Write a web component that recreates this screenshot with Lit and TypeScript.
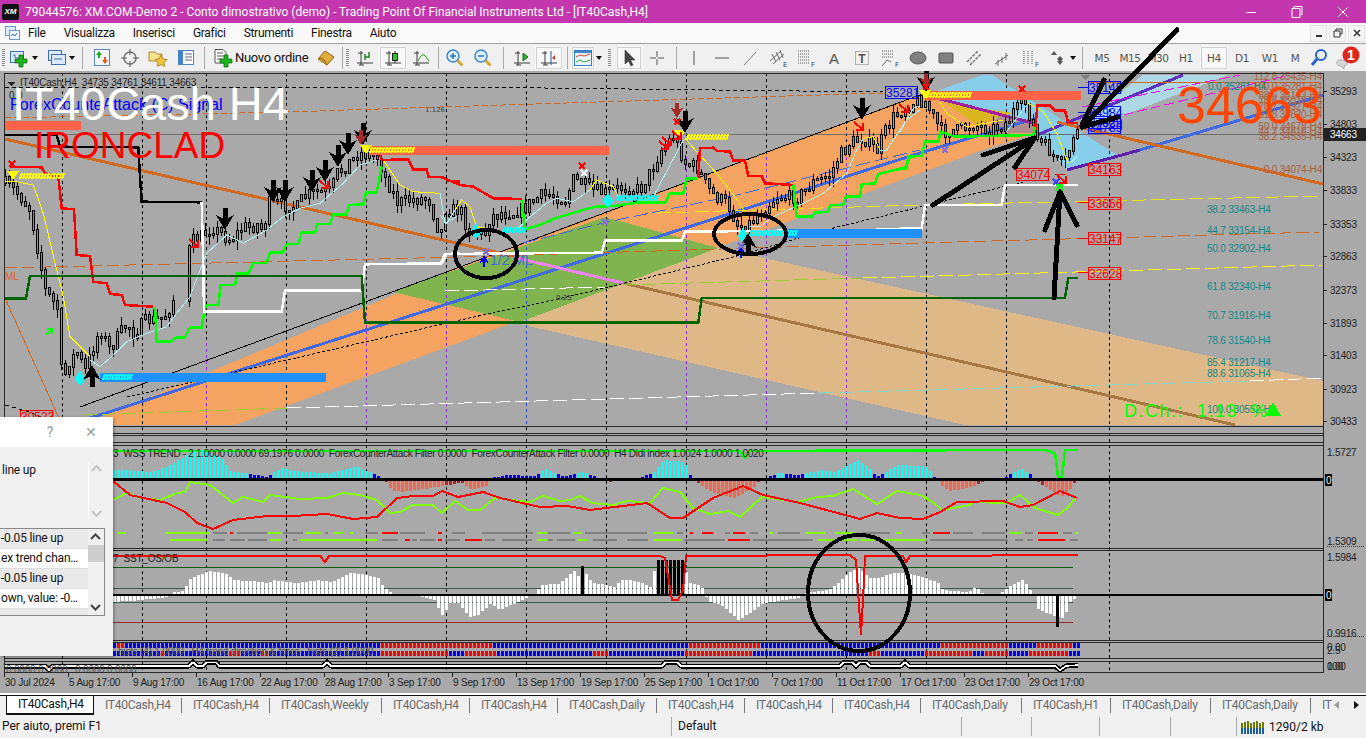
import {LitElement, html, svg, css} from 'lit';
import {customElement} from 'lit/decorators.js';

type Pt = [number, number];

// coordinates below were read off 3x crops, z() brings them back to page pixels
const z = (ox: number, oy: number, l: number[]): Pt[] => {
  const r: Pt[] = [];
  for (let i = 0; i < l.length; i += 2) r.push([ox + l[i] / 3, oy + l[i + 1] / 3]);
  return r;
};
const flat = (l: number[]): Pt[] => z(0, 0, l.map((v) => v * 3));
const lerp = (p: Pt[], x: number) => {
  if (x <= p[0][0]) return p[0][1];
  for (let i = 1; i < p.length; i++) {
    if (x <= p[i][0]) {
      const t = (x - p[i - 1][0]) / (p[i][0] - p[i - 1][0] || 1);
      return p[i - 1][1] + t * (p[i][1] - p[i - 1][1]);
    }
  }
  return p[p.length - 1][1];
};
let seed = 7;
const rnd = () => {
  seed = (seed * 16807) % 2147483647;
  return seed / 2147483647;
};

const path = (p: Pt[]) => p.map(([x, y]) => `${x.toFixed(1)},${y.toFixed(1)}`).join(' ');
const line = (p: Pt[], color: string, w = 1, dash = '') =>
  svg`<polyline points=${path(p)} fill="none" stroke=${color} stroke-width=${w} stroke-dasharray=${dash}></polyline>`;
const poly = (p: Pt[], color: string) => svg`<polygon points=${path(p)} fill=${color}></polygon>`;

const PRICE: Pt[] = [
  ...flat([5, 183, 17, 193, 30, 210, 37, 247, 45, 290, 57, 308, 62, 385, 68, 363, 77, 353, 85, 370, 93, 347, 100, 330, 110, 350, 117, 337, 127, 323, 133, 333, 147, 320, 160, 320, 167, 313, 173, 300, 183, 292]),
  ...flat([190, 243, 205, 233, 213, 228, 230, 240, 242, 228, 257, 225, 263, 230, 269, 203, 283, 205, 297, 207, 302, 198, 315, 192, 330, 192, 337, 173, 350, 162, 358, 153, 377, 157, 385, 178, 397, 202, 413, 200, 428, 198, 437, 227, 442, 232, 445, 210, 460, 210, 465, 223, 470, 233, 485, 233, 490, 217, 502, 213, 513, 213, 525, 207, 542, 195, 550, 195, 565, 200, 573, 180, 582, 183, 592, 190, 605, 193, 622, 187, 640, 190, 653, 167, 662, 148, 673, 137, 685, 163, 697, 168, 707, 187, 715, 197, 727, 203, 738, 227, 750, 223, 765, 207, 777, 197, 798, 197, 813, 183, 830, 175, 838, 158, 850, 143, 862, 138, 877, 150, 882, 137, 893, 117, 907, 107, 917, 100, 925, 102, 942, 133, 957, 130, 973, 125, 990, 130, 1007, 123, 1013, 112, 1025, 103, 1030, 117, 1037, 140, 1047, 148, 1057, 162, 1063, 167, 1069, 150, 1073, 135, 1078, 132]),
];

const HIST_TOP = flat([113, 470, 127, 470, 150, 472, 170, 465, 190, 452, 200, 450, 220, 458, 230, 472, 245, 473, 265, 477, 280, 468, 300, 472, 330, 473, 355, 466, 375, 475, 385, 482, 390, 490, 400, 492, 417, 490, 447, 485, 460, 482, 470, 490, 487, 485, 490, 478, 507, 475, 533, 476, 545, 469, 563, 477, 582, 472, 595, 477, 607, 482, 620, 480, 635, 479, 653, 472, 663, 460, 683, 462, 687, 468, 690, 479, 700, 485, 710, 492, 733, 498, 753, 487, 758, 481, 767, 477, 777, 473, 797, 475, 820, 470, 833, 472, 857, 460, 870, 470, 875, 477, 897, 465, 920, 466, 927, 468, 933, 477, 943, 488, 950, 491, 970, 487, 983, 481, 1003, 478, 1020, 468, 1030, 475, 1037, 482, 1060, 497, 1070, 488, 1077, 477]);
const HIST_OS = flat([113, 602, 140, 600, 167, 597, 173, 592, 183, 591, 188, 579, 208, 571, 223, 573, 233, 580, 260, 582, 267, 584, 272, 580, 293, 583, 317, 580, 330, 582, 350, 572, 377, 578, 383, 588, 390, 593, 398, 596, 417, 596, 433, 600, 442, 617, 448, 603, 457, 603, 468, 617, 477, 615, 490, 603, 498, 610, 517, 602, 532, 595, 540, 585, 557, 584, 573, 571, 577, 576, 585, 574, 590, 582, 613, 587, 622, 579, 638, 582, 650, 587, 655, 560, 683, 560, 687, 583, 700, 585, 703, 593, 708, 602, 720, 605, 737, 620, 750, 612, 763, 603, 797, 598, 805, 593, 828, 590, 837, 583, 848, 572, 857, 568, 870, 579, 880, 577, 893, 573, 903, 573, 923, 577, 937, 583, 942, 590, 967, 592, 975, 587, 980, 593, 997, 595, 1007, 587, 1022, 579, 1030, 592, 1033, 595, 1037, 609, 1055, 617, 1063, 618, 1068, 603, 1075, 598]);

const G = '#7fff00';
const S = '#808080';
const R = '#ff0000';
const DASH1: [number, number, string][] = [[118, 126, G], [165, 210, G], [213, 227, S], [230, 233, R], [237, 267, S], [268, 282, G], [283, 303, S], [305, 322, G], [325, 328, S], [333, 343, G], [350, 353, G], [365, 378, S], [382, 398, R], [400, 425, S], [438, 442, R], [452, 465, S], [482, 533, S], [537, 547, G], [548, 570, S], [573, 582, G], [585, 647, S], [653, 673, G], [677, 683, S], [690, 693, R], [702, 713, R], [725, 730, S], [733, 745, R], [750, 758, S], [770, 773, G], [778, 800, S], [805, 825, G], [835, 855, G], [862, 890, S], [895, 902, G], [922, 930, S], [933, 950, R], [953, 973, S], [982, 1005, S], [1010, 1022, G], [1025, 1033, S], [1038, 1058, R], [1063, 1072, S], [1075, 1078, G]];
const DASH2: [number, number, string][] = [[170, 208, G], [213, 225, S], [230, 245, S], [248, 267, S], [270, 282, G], [293, 297, S], [300, 377, G], [382, 398, S], [405, 410, R], [412, 417, S], [420, 435, S], [438, 442, R], [445, 460, S], [465, 482, R], [485, 495, S], [502, 532, S], [537, 547, G], [548, 553, S], [557, 575, S], [577, 587, G], [593, 617, S], [627, 648, S], [653, 682, G], [684, 700, S], [700, 725, S], [728, 750, R], [753, 813, S], [817, 857, G], [860, 925, G], [930, 1008, S], [1015, 1023, S], [1027, 1033, S], [1038, 1065, R], [1070, 1078, S]];
const ROW1: [number, number][] = [[115, 123], [380, 490], [688, 758], [940, 1008], [1035, 1072]];
const ROW2: [number, number][] = [[160, 163], [228, 240], [260, 267], [380, 447], [463, 495], [592, 608], [685, 752], [868, 878], [924, 972], [985, 1007], [1028, 1067]];

const GRID = [62, 142, 206, 286, 366, 446, 526, 606, 686, 766, 846, 926, 1006, 1109];
// [x, first y] of the vertical separators that turn coloured lower down; starts stay in phase with the black dashes
const VLINES: [number, number, string][] = [[206, 343, '#8a2be2'], [366, 313, '#8a2be2'], [446, 289, '#8a2be2'], [526, 241, '#2b4fd0'], [686, 157, '#8a2be2'], [766, 157, '#8a2be2'], [846, 157, '#8a2be2']];
const PRICES: [string, number][] = [['35293', 95], ['34803', 128], ['34323', 161], ['33833', 194], ['33353', 228], ['32863', 260], ['32373', 294], ['31893', 327], ['31403', 359], ['30923', 393], ['30433', 425]];
const FIBO_TEAL: [string, number][] = [['38.2 33463-H4', 213], ['44.7 33154-H4', 234], ['50.0 32902-H4', 252], ['61.8 32340-H4', 290], ['70.7 31916-H4', 319], ['78.6 31540-H4', 344], ['85.4 31217-H4', 366], ['88.6 31065-H4', 377], ['100.0 30552-H4', 413]];
const FIBO_BROWN: [string, number][] = [['112.8 35435-H4', 80], ['100.0 35281-H4', 90], ['88.6 35143-H4', 99], ['78.6 35016-H4', 104], ['70.7 34927-H4', 110], ['61.8 34820-H4', 118], ['50.0 34678-H4', 130], ['44.7 34616-H4', 135], ['38.2 34535-H4', 140], ['0.0 34074-H4', 173]];
const TIMES: [string, number][] = [['30 Jul 2024', 4], ['5 Aug 17:00', 68], ['9 Aug 17:00', 132], ['16 Aug 17:00', 196], ['22 Aug 17:00', 260], ['28 Aug 17:00', 324], ['3 Sep 17:00', 388], ['9 Sep 17:00', 452], ['13 Sep 17:00', 516], ['19 Sep 17:00', 580], ['25 Sep 17:00', 644], ['1 Oct 17:00', 708], ['7 Oct 17:00', 772], ['11 Oct 17:00', 836], ['17 Oct 17:00', 900], ['23 Oct 17:00', 964], ['29 Oct 17:00', 1028]];

const arrow = (x: number, tip: number, dir: number, color = '#000', s = 1) =>
  poly(
    [[-2.5, 22], [2.5, 22], [2.5, 12], [9, 15], [0, 0], [-9, 15], [-2.5, 12]].map(([dx, dy]) => [x + dx * s, tip - dir * dy * s] as Pt),
    color
  );
const downArrow = (x: number, tip: number, color = '#000', s = 1) => arrow(x, tip, 1, color, s);
const upArrow = (x: number, tip: number, color = '#000', s = 1) => arrow(x, tip, -1, color, s);
const hatch = (x1: number, x2: number, y: number, color: string) => {
  const out = [];
  for (let x = x1; x < x2; x += 3) out.push(svg`<line x1=${x} y1=${y + 3} x2=${x + 2} y2=${y - 3} stroke=${color} stroke-width="2"></line>`);
  return out;
};
const mark = (x: number, y: number, color: string, w = 1.5) =>
  svg`<path d="M${x - 3} ${y - 3}L${x + 3} ${y + 3}M${x + 3} ${y - 3}L${x - 3} ${y + 3}" stroke=${color} stroke-width=${w} fill="none"></path>`;
const redArrow = (x: number, y: number) =>
  svg`<path d="M${x - 6} ${y - 6}L${x + 3} ${y + 2}M${x + 3} ${y - 5}V${y + 2}H${x - 4}" stroke="#f00" stroke-width="2" fill="none"></path>`;
const priceBox = (x: number, y: number, label: string, color: string) => svg`
  <rect x=${x + 0.5} y=${y + 0.5} width="32" height="12" fill="none" stroke=${color}></rect>
  <text x=${x + 1} y=${y + 11} class="boxed" fill=${color}>${label}</text>`;

@customElement('mt-chart')
export class MtChart extends LitElement {
  private candles() {
    const out = [];
    let open = lerp(PRICE, 5);
    for (let x = 5; x <= 1078; x += 4) {
      if (x > 176 && x < 189) continue;
      const close = lerp(PRICE, x) + (rnd() - 0.5) * 13;
      const top = Math.round(Math.min(open, close));
      const bot = Math.round(Math.max(open, close));
      const hi = Math.round(top - rnd() * 9);
      const lo = Math.round(bot + rnd() * 10);
      const h = Math.max(1, bot - top);
      out.push(svg`
        <rect x=${x} y=${hi} width="1" height=${lo - hi} fill="#000"></rect>
        <rect x=${x - 1} y=${top - 1} width="3" height=${h + 2} fill="#000"></rect>
        <rect x=${x} y=${top} width="1" height=${h} fill=${close < open ? '#3ee83e' : '#f07020'}></rect>`);
      open = close;
    }
    return out;
  }

  private wssBars() {
    const out = [];
    for (let x = 113; x <= 1076; x += 4) {
      const y = Math.round(lerp(HIST_TOP, x));
      const v = 479 - y;
      const color = v >= 0 ? (v > 5 ? '#00ffff' : '#0000ff') : v < -6 ? '#ff6347' : '#b22222';
      out.push(svg`<rect x=${x} width="3" y=${Math.min(y, 479)} height=${Math.abs(v)} fill=${color}></rect>`);
    }
    return out;
  }

  private osBars() {
    const out = [];
    for (let x = 113; x <= 1076; x += 4) {
      const y = Math.round(lerp(HIST_OS, x));
      const black = (x >= 655 && x <= 683) || (x >= 578 && x <= 583);
      const top = x >= 578 && x <= 583 ? 566 : y;
      out.push(svg`<rect x=${x} width="3" y=${Math.min(top, 594)} height=${Math.abs(594 - top)} fill=${black ? '#000' : '#fff'}></rect>`);
    }
    return out;
  }

  private rows() {
    const out = [];
    for (let x = 5; x <= 1078; x += 4) {
      const r1 = ROW1.some(([a, b]) => x >= a && x <= b);
      const r2 = ROW2.some(([a, b]) => x >= a && x <= b);
      out.push(svg`<rect x=${x} y="643" width="3" height="5" fill=${r1 ? R : '#0000ff'}></rect>
        <rect x=${x} y="651" width="3" height="5" fill=${r2 ? R : '#0000ff'}></rect>`);
    }
    return out;
  }

  private main() {
    return svg`
      ${poly([[515, 323], [718, 248], [1323, 381], [1323, 425], [965, 425]], '#deb887')}
      ${poly([[83, 425], [460, 267], [925, 93], [1037, 133], [983, 150], [235, 425]], '#f4a460')}
      ${poly([[393, 292], [605, 217], [718, 248], [520, 322]], '#80b44f')}
      ${poly([[925, 95], [982, 75], [992, 75], [1120, 157], [1067, 170], [1037, 133]], '#87ceeb')}
      ${poly([[1082, 122], [1143, 75], [1228, 75], [1083, 131]], '#add8e6')}
      ${poly([[943, 102], [1012, 113], [977, 125]], '#dab520')}
      ${poly([[1000, 115], [1037, 125], [1037, 133], [983, 134]], '#b08c8c')}
      ${GRID.map((x) => svg`<line x1=${x + 0.5} x2=${x + 0.5} y1="73" y2="672" stroke="#000" stroke-dasharray="3 3"></line>`)}
      ${VLINES.map(([x, y, c]) => svg`<line x1=${x + 0.5} x2=${x + 0.5} y1=${y} y2="426" stroke=${c} stroke-dasharray="3 3"></line>`)}
      <line x1="5" x2="1323" y1="134.5" y2="134.5" stroke="#707070"></line>

      ${line([[80, 407], [460, 267], [925, 93]], '#000')}
      ${line([[62, 427], [920, 153], [1037, 118]], '#4169e1', 3)}
      ${line([[1067, 170], [1140, 150]], '#5b1fb0', 3)}
      ${line([[1140, 150], [1323, 95]], '#4169e1', 3)}
      ${line([[925, 95], [1037, 124]], '#a020a0', 3)}
      ${line([[1037, 135], [1183, 75]], '#5b2fc0', 3)}
      ${line([[1082, 107], [1240, 75]], '#ff00ff', 1, '10 4')}
      ${line([[1110, 118], [1290, 75]], '#ff00ff', 1, '10 4')}
      ${line([[5, 139], [517, 257]], '#d2691e', 3)}
      ${line([[517, 258], [623, 283]], '#ee82ee', 3)}
      ${line([[623, 283], [1235, 425]], '#a87844', 3)}
      ${line([[1057, 122], [1323, 184]], '#d2691e', 3)}
      ${line([[1085, 83], [1323, 82]], '#d2691e')}
      ${line([[5, 88], [460, 87], [883, 92]], '#000', 1, '4 3')}
      ${line([[5, 118], [287, 112], [440, 107], [883, 93]], '#d2691e', 1, '6 3')}
      ${line([[5, 268], [460, 257], [787, 247], [920, 243], [1320, 232]], '#d2691e', 1, '12 5')}
      ${line([[657, 213], [920, 205], [1323, 196]], '#e8e800', 1, '14 5')}
      ${line([[623, 285], [863, 278]], '#9acd32', 1, '14 5')}
      ${line([[863, 278], [1323, 265]], '#ffff00', 1, '14 5')}
      ${line([[83, 415], [287, 408]], '#9acd32', 1, '14 5')}
      ${line([[287, 408], [820, 393]], '#fff', 1, '14 5')}
      ${line([[820, 393], [1250, 381]], '#7fd8c8', 1, '14 5')}
      ${line([[1250, 381], [1323, 378]], '#fff', 1, '14 5')}
      ${line([[445, 291], [607, 287]], '#fff', 1, '14 5')}
      ${line([[127, 397], [460, 320], [567, 297], [733, 257], [837, 227], [920, 207], [1023, 182]], '#000', 1, '3 2')}
      ${line([[523, 243], [607, 222], [737, 195], [920, 150]], '#4169e1', 1, '14 5')}
      ${line([[5, 405], [30, 412], [62, 427]], '#000', 1, '4 3')}
      ${line([[5, 298], [62, 425]], '#d2691e')}

      ${this.candles()}

      ${line(z(0, 70, [270, 870, 300, 890, 340, 855, 380, 815, 440, 790, 500, 770, 530, 730, 570, 680, 600, 600, 620, 550, 680, 495, 730, 520, 800, 480, 850, 440, 900, 415, 960, 400, 1030, 340, 1080, 285, 1130, 270]), '#afeeee')}
      ${line(z(0, 70, [15, 335, 50, 335, 100, 345, 130, 430, 170, 600, 190, 680, 210, 800, 270, 860]), '#ffff00')}
      ${line(z(0, 70, [1150, 270, 1200, 345, 1240, 365, 1320, 370]), '#ffff00')}
      ${line(z(0, 70, [1320, 370, 1335, 460, 1370, 440]), '#afeeee')}
      ${line(z(440, 70, [0, 435, 20, 460, 45, 420]), '#afeeee')}
      ${line(z(440, 70, [45, 420, 65, 390, 90, 410, 110, 470, 170, 480]), '#ffff00')}
      ${line(z(440, 70, [200, 480, 240, 470, 270, 440, 320, 400, 350, 385, 400, 395, 450, 360]), '#afeeee')}
      ${line(z(440, 70, [450, 360, 470, 330, 520, 350, 535, 380]), '#ffff00')}
      ${line(z(440, 70, [535, 380, 640, 380, 730, 210]), '#afeeee')}
      ${line(z(440, 70, [735, 205, 770, 245, 830, 310, 900, 400, 920, 440]), '#ffff00')}
      ${line(z(440, 70, [930, 470, 960, 470, 1000, 440, 1090, 400, 1150, 370, 1220, 310, 1250, 240, 1270, 205]), '#afeeee')}
      ${line(z(440, 70, [1270, 205, 1300, 200, 1320, 240]), '#ffff00')}
      ${line(z(440, 70, [1320, 240, 1340, 240, 1400, 150, 1440, 120]), '#afeeee')}
      ${line(z(900, 70, [0, 185, 40, 115, 60, 108]), '#afeeee')}
      ${line(z(900, 70, [120, 95, 140, 130, 200, 170, 310, 150]), '#ffff00')}
      ${line(z(900, 70, [320, 185, 380, 105]), '#afeeee')}
      ${line(z(900, 70, [385, 100, 430, 125, 470, 190, 505, 280]), '#ffff00')}
      ${line(z(900, 70, [510, 280, 530, 260]), '#afeeee')}

      ${line(z(0, 70, [30, 290, 125, 292, 135, 310, 175, 320, 185, 415, 222, 418, 230, 555, 270, 558, 280, 635, 320, 640, 330, 672, 365, 675, 375, 705, 460, 710]), R, 2.5)}
      ${line(z(0, 70, [1140, 255, 1145, 270, 1225, 268, 1240, 298, 1280, 298, 1285, 320, 1330, 322, 1345, 333, 1380, 335]), R, 2.5)}
      ${line(z(440, 70, [0, 320, 60, 345, 100, 350, 160, 385, 245, 387]), R, 2.5)}
      ${line(z(440, 70, [775, 325, 780, 235, 820, 233, 830, 242, 870, 245, 880, 272, 915, 272, 925, 318, 965, 318, 975, 340, 1060, 345]), R, 2.5)}
      ${line(z(900, 70, [405, 190, 412, 107, 450, 107, 465, 122, 495, 122, 505, 158, 535, 160]), R, 2.5)}
      ${line(z(0, 70, [465, 710, 470, 815, 510, 815, 530, 802, 555, 802, 570, 773, 605, 773, 612, 730, 618, 705, 655, 705, 662, 645, 705, 645, 712, 610, 745, 610, 760, 580, 800, 578, 810, 548, 848, 548, 860, 522, 895, 522, 905, 488, 945, 488, 952, 462, 990, 462, 1000, 433, 1040, 433, 1048, 405, 1090, 403, 1098, 367, 1130, 367, 1145, 290]), '#00ff00', 2.5)}
      ${line(z(440, 70, [245, 390, 255, 478, 300, 465, 345, 445, 395, 430, 445, 415, 470, 410, 520, 408, 590, 398, 675, 398, 690, 370, 730, 370, 740, 325, 775, 325]), '#00ff00', 2.5)}
      ${line(z(440, 70, [1060, 345, 1070, 440, 1115, 440, 1125, 428, 1165, 425, 1170, 405, 1210, 405, 1218, 380, 1260, 380, 1265, 343, 1305, 340, 1315, 312, 1395, 293, 1410, 260, 1440, 258]), '#00ff00', 2.5)}
      ${line(z(900, 70, [0, 295, 20, 295, 25, 258, 65, 258, 75, 215, 115, 215, 122, 185, 165, 200, 400, 195, 405, 170]), '#00ff00', 2.5)}
      ${line(z(0, 70, [15, 195, 170, 195, 180, 230, 415, 232, 420, 320, 425, 395, 605, 397]), '#000', 2.5)}
      ${line(z(0, 70, [605, 397, 610, 590, 612, 725, 845, 725, 855, 662, 1085, 662, 1095, 583, 1325, 580, 1340, 552, 1380, 550]), '#fff', 2.5)}
      ${line(z(440, 70, [0, 585, 15, 552, 485, 548, 495, 512, 725, 512, 735, 485, 1440, 478]), '#fff', 2.5)}
      ${line(z(900, 70, [0, 475, 65, 475, 75, 405, 305, 405, 315, 345, 535, 345]), '#fff', 2.5)}
      ${line(z(0, 70, [15, 685, 78, 685, 90, 618, 1085, 618, 1095, 758, 1380, 758]), '#006400', 2.5)}
      ${line(z(440, 70, [0, 758, 775, 758, 785, 684, 1440, 684]), '#006400', 2.5)}
      ${line(z(900, 70, [0, 684, 495, 684, 505, 624, 535, 624]), '#006400', 2.5)}

      <rect x="100" y="373" width="226" height="9" fill="#1e90ff"></rect>
      <rect x="787" y="229" width="135" height="9" fill="#1e90ff"></rect>
      <rect x="5" y="121" width="76" height="9" fill="#ff6347"></rect>
      <rect x="370" y="146" width="239" height="9" fill="#ff6347"></rect>
      <rect x="925" y="91" width="156" height="9" fill="#ff6347"></rect>
      ${hatch(20, 63, 176, '#ffff00')} ${hatch(370, 415, 150, '#ffff00')}
      ${hatch(687, 727, 137, '#ffff00')} ${hatch(927, 972, 95, '#ffff00')}
      ${hatch(103, 132, 377, '#00ffff')} ${hatch(503, 525, 230, '#00ffff')}
      ${hatch(617, 657, 198, '#00ffff')} ${hatch(750, 797, 233, '#00ffff')}
      ${[[13, 177], [366, 151], [680, 136], [925, 96]].map(([x, y]) => poly([[x - 6, y - 6], [x + 6, y - 6], [x, y + 3]], '#ffff00'))}
      ${[[80, 376], [476, 229], [608, 198], [743, 233]].map(([x, y]) => poly([[x - 5, y + 3], [x, y - 6], [x + 5, y + 3], [x + 1, y + 9], [x - 1, y + 9]], '#00ffff'))}

      ${[[225, 230], [273, 202], [285, 202], [312, 192], [325, 182], [338, 167], [348, 155], [363, 145], [685, 133], [862, 120], [926, 92]].map(([x, y]) => downArrow(x, y))}
      ${downArrow(361, 145, '#a52a2a', 0.7)} ${downArrow(677, 118, '#a52a2a', 0.7)} ${downArrow(926, 88, '#a52a2a', 0.7)}
      ${upArrow(92, 365)} ${upArrow(748, 233)} ${upArrow(484, 255, '#0000ff', 0.55)} ${upArrow(741, 246, '#0000ff', 0.55)}
      ${[[195, 245], [325, 186], [668, 143], [678, 137], [665, 147], [860, 128], [905, 110], [1063, 181]].map(([x, y]) => redArrow(x, y))}
      ${mark(12, 164, R)} ${mark(582, 166, R)} ${mark(584, 173, '#fff', 2)} ${mark(677, 122, R)}
      ${mark(926, 87, R)} ${mark(1022, 89, R)} ${mark(945, 150, '#8a6fd0')} ${mark(605, 222, '#8a6fd0')} ${mark(486, 252, '#7a6fd0')} ${mark(741, 246, '#7a6fd0')} ${mark(1056, 182, '#4040ff', 2)}
      <path d="M46 335l6-6M47 329h5v5" stroke="#00ff00" stroke-width="1.5" fill="none"></path>
      <path d="M1055 191l6-6M1056 185h6v6" stroke="#00ff00" stroke-width="2" fill="none"></path>
      ${poly([[1081, 75], [1090, 75], [1085.5, 80]], '#808080')}
      ${poly([[8, 82], [15, 82], [11.5, 86]], '#222')}
      ${[[1078, 87, '#0000ff'], [1078, 112, '#0000ff'], [1078, 202, R], [1078, 238, R], [1078, 272, R], [1055, 174, R]].map(([x, y, c]) => svg`<line x1=${x} x2=${(x as number) + 10} y1=${y} y2=${y} stroke=${c}></line>`)}

      ${priceBox(885, 86, '35281', '#0000ff')} ${priceBox(1088, 81, '35145', '#0000ff')}
      ${priceBox(1088, 106, '34984', '#0000ff')} ${priceBox(1088, 116, '34829', '#0000ff')}
      ${priceBox(1088, 121, '34789', '#0000ff')} ${priceBox(1016, 168, '34074', R)}
      ${priceBox(1088, 163, '34163', R)} ${priceBox(1088, 197, '33666', R)}
      ${priceBox(1088, 232, '33147', R)} ${priceBox(1088, 267, '32628', R)}
      ${priceBox(20, 410, '30523', R)}

      ${FIBO_TEAL.map(([t, y]) => svg`<text x="1207" y=${y} class="lbl" fill="#0e8a8a">${t}</text>`)}
      <text x="1208" y="90" class="lbl" fill="#0e8a8a">0.0 35281-H4</text>
      ${FIBO_BROWN.map(([t, y]) => svg`<text x="1322" y=${y} class="lbl end" fill="#a8613f">${t}</text>`)}
      <text x="5" y="280" class="lbl" fill="#d2691e">ML</text>
      <text x="490" y="265" class="hand" fill="#4169e1">1/2 ML</text>
      <text x="425" y="112" class="tiny" fill="#444">1.126</text>
      <text x="556" y="300" class="tiny" fill="#333">0.25</text>
      <text x="20" y="86" class="axis">IT40Cash,H4  34735 34761 34611 34663</text>
      <text x="9" y="99" class="axis">0.0</text>

      <text x="10" y="110" class="blue">ForexCounteAttack (C) Signal</text>
      <text x="12" y="120" class="big">IT40Cash H4</text>
      <text x="34" y="158" class="iron">IRONCLAD</text>
      <text x="1177" y="123" class="last">34663</text>
      <text x="1124" y="417" class="dch">D.Ch.:  1.13  %</text>
      ${poly([[1265, 416], [1281, 416], [1273, 402]], '#00ff00')}`;
  }

  private panes() {
    const track = '5,666 45,666 49,670 53,666 189,666 193,662 197,666 203,666 207,662 216,662 219,666 323,666 327,662 331,666 662,666 666,662 677,662 681,666 840,666 844,662 852,662 856,666 860,662 866,662 870,666 901,666 905,662 909,666 1055,666 1060,670 1066,666 1078,665';
    return svg`
      ${line(flat([113, 451, 600, 451, 740, 451, 745, 458, 750, 451, 1010, 450, 1045, 450, 1055, 453, 1058, 477, 1062, 477, 1065, 450, 1078, 450]), '#00ff00', 2.5)}
      ${this.wssBars()}
      <rect x="5" y="478" width="1318" height="2.5" fill="#000"></rect>
      ${line(flat([113, 500, 127, 493, 140, 498, 160, 500, 177, 493, 185, 492, 190, 482, 210, 485, 233, 503, 243, 497, 263, 502, 270, 495, 300, 499, 327, 498, 343, 493, 360, 495, 377, 500, 390, 513, 400, 512, 413, 505, 433, 505, 442, 513, 455, 501, 468, 510, 480, 510, 495, 498, 510, 500, 530, 502, 543, 496, 560, 501, 570, 500, 580, 496, 593, 503, 613, 505, 627, 501, 650, 503, 663, 488, 680, 492, 693, 508, 710, 514, 728, 511, 740, 517, 750, 508, 762, 497, 777, 499, 797, 502, 817, 497, 833, 496, 853, 489, 877, 504, 897, 491, 920, 495, 933, 502, 942, 510, 970, 505, 973, 502, 1007, 503, 1020, 495, 1035, 508, 1058, 515, 1067, 508, 1077, 497]), G, 2)}
      ${line(flat([113, 481, 130, 495, 167, 503, 185, 512, 197, 523, 213, 529, 233, 520, 267, 516, 293, 516, 327, 514, 353, 519, 377, 517, 397, 498, 413, 496, 433, 496, 442, 491, 458, 497, 483, 492, 500, 498, 540, 507, 567, 506, 590, 510, 647, 503, 670, 518, 683, 518, 713, 498, 743, 486, 763, 495, 800, 503, 860, 519, 877, 513, 900, 518, 923, 519, 940, 512, 957, 502, 1003, 501, 1020, 507, 1033, 505, 1060, 491, 1077, 498]), R, 2)}
      ${DASH1.map(([a, b, c]) => svg`<rect x=${a} y="532" width=${b - a} height="2" fill=${c}></rect>`)}
      ${DASH2.map(([a, b, c]) => svg`<rect x=${a} y="539" width=${b - a} height="2" fill=${c}></rect>`)}
      <text x="113" y="457" class="axis leg">3  WSS TREND - 2 1.0000 0.0000 69.1976 0.0000  ForexCounterAttack Filter 0.0000  ForexCounterAttack Filter 0.0000  H4 Didi index 1.0024 1.0000 1.0020</text>

      ${[[567, '#0b5c0b'], [588, '#3c5a50'], [602, '#3c5a50'], [622, '#a02a2a']].map(([y, c]) => svg`<line x1="113" x2="1073" y1=${(y as number) + 0.5} y2=${(y as number) + 0.5} stroke=${c}></line>`)}
      ${this.osBars()}
      <rect x="1056" y="595" width="3" height="32" fill="#000"></rect>
      <rect x="5" y="594" width="1318" height="1.5" fill="#000"></rect>
      ${line(flat([113, 556, 320, 556, 325, 562, 329, 556, 660, 556, 665, 558, 672, 600, 678, 600, 683, 590, 686, 556, 850, 555, 856, 560, 858, 590, 861, 635, 863, 600, 865, 556, 903, 556, 906, 562, 910, 556, 1078, 555]), R, 2)}
      <text x="113" y="562" class="axis">7  SST_OS/OB</text>

      ${this.rows()}
      <text x="118" y="655" class="axis dim">hists (4) 1.0000   H4 trend direction &amp; force   hists (2) 1.0000</text>
      <polyline points=${track} fill="none" stroke="#000" stroke-width="5" stroke-linejoin="round"></polyline>
      <polyline points=${track} fill="none" stroke="#fff" stroke-width="1.5" stroke-linejoin="round"></polyline>
      <text x="6" y="673" class="axis dim">0.0000 0.0000   0.0000 0.0000</text>`;
  }

  private frame() {
    const rows = [426, 433, 435, 442, 445, 548, 550, 640, 642, 658, 661, 672];
    return svg`
      ${rows.map((y) => svg`<line x1="4" x2="1323" y1=${y + 0.5} y2=${y + 0.5} stroke="#2a2a2a"></line>`)}
      <rect x="4.5" y="73.5" width="1319" height="599" fill="none" stroke="#2a2a2a"></rect>
      ${PRICES.map(([t, y]) => svg`<line x1="1323" x2="1327" y1=${y - 4} y2=${y - 4} stroke="#222"></line><text x="1330" y=${y} class="axis">${t}</text>`)}
      <rect x="1324" y="128" width="42" height="13" fill="#222"></rect>
      <text x="1330" y="138" class="axis inv">34663</text>
      ${[['1.5727', 456], ['1.5309', 545], ['1.5984', 561], ['0.9916', 637], ['0.00', 651], ['2.5', 654], ['0.00', 670], ['100', 670]].map(([t, y]) => svg`<text x="1327" y=${y} class="axis">${t}</text>`)}
      ${[484, 599].map((y) => svg`<rect x="1325" y=${y - 10} width="7" height="12" fill="#000"></rect><text x="1326" y=${y} class="axis inv">0</text>`)}
      ${[546, 636].map((y) => svg`<line x1="1327" x2="1364" y1=${y + 0.5} y2=${y + 0.5} stroke="#444" stroke-dasharray="1 1"></line>`)}
      ${TIMES.map(([t, x]) => svg`<line x1=${x + 0.5} x2=${x + 0.5} y1="672" y2="677" stroke="#222"></line><text x=${x + 1} y="686" class="axis">${t}</text>`)}`;
  }

  override render() {
    return html`
      <svg viewBox="0 71 1366 622" width="1366" height="622" shape-rendering="crispEdges">
        ${this.main()} ${this.panes()} ${this.frame()}
      </svg>
      <div class="dialog">
        <div class="dlg-head"><span class="help">?</span><span class="x">✕</span></div>
        <div class="dlg-body">
          <div class="dlg-top">
            <span class="msg">line up</span>
            <div class="bar-a">
              <svg width="13" height="10" viewBox="0 0 13 10"><path d="M2 8l4.500-5L11 8" fill="none" stroke="#c4c4c4" stroke-width="2"></path></svg>
              <svg width="13" height="10" viewBox="0 0 13 10"><path d="M2 2l4.500 5L11 2" fill="none" stroke="#c4c4c4" stroke-width="2"></path></svg>
            </div>
          </div>
          <div class="list">
            <div class="rows">
              <div class="row gray">-0.05 line up</div>
              <div class="row">ex trend chan…</div>
              <div class="row gray">-0.05 line up</div>
              <div class="row">own, value: -0…</div>
              <div class="row gray"></div>
            </div>
            <div class="list-bar">
              <svg width="15" height="16" viewBox="0 0 15 16"><path d="M3 10l4.500-4.500L12 10" fill="none" stroke="#444" stroke-width="2"></path></svg>
              <i class="thumb"></i>
              <svg class="down" width="15" height="16" viewBox="0 0 15 16"><path d="M3 6l4.500 4.500L12 6" fill="none" stroke="#444" stroke-width="2"></path></svg>
            </div>
          </div>
        </div>
      </div>
    `;
  }

  static override styles = css`
    :host {
      display: block;
      position: relative;
      height: 622px;
      overflow: hidden;
      background: #a9a9a9;
    }
    svg {
      display: block;
    }
    text {
      white-space: pre;
    }
    .axis {
      font: 10px 'Liberation Sans', sans-serif;
      letter-spacing: -0.2px;
      fill: #222;
    }
    .leg {
      letter-spacing: -0.3px;
    }
    .inv {
      fill: #fff;
    }
    .dim {
      fill: #555;
    }
    .lbl {
      font: 10px 'Liberation Sans', sans-serif;
      letter-spacing: -0.2px;
    }
    .end {
      text-anchor: end;
    }
    .tiny {
      font: 7px 'DejaVu Sans', sans-serif;
    }
    .hand {
      font: 14px 'Liberation Sans', sans-serif;
    }
    .boxed {
      font: 12px 'Liberation Sans', sans-serif;
    }
    .blue {
      font: 16px 'Liberation Sans', sans-serif;
      fill: #0000ff;
    }
    .big {
      font: 47px 'Liberation Sans', sans-serif;
      fill: #fff;
    }
    .iron {
      font: 37px 'Liberation Sans', sans-serif;
      fill: #ff0000;
    }
    .last {
      font: 52px 'Liberation Sans', sans-serif;
      fill: #ff4500;
    }
    .dch {
      font: 18px 'Liberation Sans', sans-serif;
      letter-spacing: 1.5px;
      fill: #00ff00;
    }
    .dialog {
      position: absolute;
      left: 0;
      top: 346px;
      width: 113px;
      height: 239px;
      display: flex;
      flex-direction: column;
      background: #f0f0f0;
      box-shadow: 1px 1px 3px rgba(0, 0, 0, 0.35);
      font: 12px Roboto, sans-serif;
      letter-spacing: -0.2px;
      color: #111;
    }
    .dlg-head {
      height: 30px;
      background: #fff;
      display: flex;
      align-items: center;
      justify-content: flex-end;
      gap: 32px;
      padding-right: 16px;
      color: #999;
      font-size: 14px;
    }
    .dlg-body {
      flex: 1;
      display: flex;
      flex-direction: column;
    }
    .dlg-top {
      display: flex;
      justify-content: space-between;
      height: 81px;
      padding: 16px 10px 0 2px;
      box-sizing: border-box;
    }
    .bar-a {
      width: 14px;
      height: 56px;
      border-left: 1px solid #fff;
      display: flex;
      flex-direction: column;
      justify-content: space-between;
      align-items: center;
    }
    .list {
      width: 105px;
      height: 88px;
      border: 1px solid #8a8a8a;
      border-left: 0;
      display: flex;
      background: #fff;
      box-sizing: border-box;
    }
    .rows {
      flex: 1;
      overflow: hidden;
    }
    .row {
      height: 19px;
      line-height: 18px;
      white-space: nowrap;
      border-bottom: 1px solid #ddd;
      padding-left: 1px;
    }
    .gray {
      background: #e9e9e9;
    }
    .list-bar {
      width: 16px;
      background: #f0f0f0;
      display: flex;
      flex-direction: column;
    }
    .thumb {
      display: block;
      height: 17px;
      background: #cdcdcd;
    }
    .down {
      margin-top: auto;
    }
  `;
}

const ic = (body: unknown, w = 20) => html`<svg width=${w} height="20" viewBox="0 0 20 20">${body}</svg>`;
const frame = svg`<rect x="1.500" y="3.500" width="13" height="11" fill="#dbe9fb" stroke="#3b6fb5"></rect><path d="M4 7h2v3h4" stroke="#3b6fb5" fill="none"></path>`;
const plus = (x: number, y: number) => svg`<path d="M${x + 4} ${y}h4v4h4v4h-4v4h-4v-4h-4v-4h4z" fill="#1fb31f" stroke="#0a6a0a" stroke-width="0.7"></path>`;
const axes = svg`<path d="M6 3v14M2 15h16" stroke="#3d3d3d" fill="none"></path><path d="M4 17h5M3 5h5" stroke="#3d3d3d" fill="none"></path>`;
const glass = (sign: boolean) => svg`
  <circle cx="8" cy="8" r="6" fill="#dbeeff" stroke="#3f86c6" stroke-width="1.5"></circle>
  <path d="M5 8h6${sign ? 'M8 5v6' : ''}" stroke="#2a6fb0" stroke-width="1.5"></path>
  <path d="M12.500 12.500l5 5" stroke="#d6a92e" stroke-width="3"></path>`;
const fLabel = (t: string) => svg`<text x="15" y="19" font-family="DejaVu Sans" font-size="7" fill="#444">${t}</text>`;
const dots = svg`<path d="M2 3h12M2 6h12M2 9h12" stroke="#555" stroke-dasharray="1 1"></path>`;
const drop = html`<svg width="8" height="20" viewBox="0 0 8 20"><path d="M1 8h6l-3 4z" fill="#111"></path></svg>`;
const grip = html`<i class="grip"></i>`;
const sep = html`<i class="sep"></i>`;

// [width, content, active]
const TOOLS: [number, unknown, boolean?][] = [
  [7, grip],
  [24, ic(svg`${frame}${plus(6, 7)}`)],
  [8, drop],
  [7, ''],
  [22, ic(svg`<rect x="1.500" y="2.500" width="13" height="10" fill="#dbe9fb" stroke="#3b6fb5"></rect><rect x="4.500" y="6.500" width="14" height="10" fill="#dbe9fb" stroke="#3b6fb5"></rect><path d="M7 11h8" stroke="#3b6fb5"></path>`)],
  [8, drop],
  [12, sep],
  [28, ic(svg`<rect x="2.500" y="1.500" width="15" height="16" fill="#f3f7fc" stroke="#5b87b8"></rect><path d="M7 3l3 4H8v3H6V7H4z" fill="#1fa81f"></path><path d="M13 16l-3-4h2V9h2v3h2z" fill="#e05a20"></path>`)],
  [28, ic(svg`<circle cx="10" cy="10" r="6" fill="none" stroke="#777" stroke-width="1.500"></circle><path d="M10 1v6M10 13v6M1 10h6M13 10h6" stroke="#555"></path>`)],
  [28, ic(svg`<path d="M1 4h6l2 2h5v7H1z" fill="#f5df8b" stroke="#a98b3a"></path><path d="M13 7l2 4 4 .5-3 3 .8 4-3.800-2-3.800 2 .8-4-3-3 4-.5z" fill="#f7c52f" stroke="#a98b3a"></path>`)],
  [28, ic(svg`<rect x="2.500" y="2.500" width="15" height="14" fill="#fff" stroke="#4c84bd"></rect><rect x="3" y="3" width="4" height="13" fill="#3f86c6"></rect><path d="M9 6h7M9 9h7M9 12h7" stroke="#667"></path>`)],
  [8, sep],
  [104, html`<span class="order">${ic(svg`<path d="M2 1.500h8l3 3V15H2z" fill="#fff" stroke="#555"></path><path d="M4 5h6M4 8h7M4 11h5" stroke="#555"></path>${plus(7, 7)}`)}<span>Nuovo ordine</span></span>`],
  [28, ic(svg`<path d="M2 11l7-8 9 6-7 8z" fill="#e3ad3a" stroke="#8a641a"></path><path d="M2 11c3-2 6-1 9 6" fill="#c98c22" stroke="#8a641a"></path>`)],
  [4, sep],
  [7, grip],
  [28, ic(svg`${axes}<path d="M10 12V6M14 10V4M10 9h2M12 9h2" stroke="#1d8a1d" fill="none" stroke-width="1.500"></path>`), false],
  [28, ic(svg`${axes}<path d="M12 3v12" stroke="#222"></path><rect x="9.500" y="5.500" width="5" height="7" fill="#27c527" stroke="#222"></rect>`), true],
  [28, ic(svg`${axes}<path d="M7 13c2-4 4-7 6-6s3 4 5 6" stroke="#1d8a1d" fill="none"></path>`)],
  [6, sep],
  [28, ic(glass(true))],
  [28, ic(glass(false))],
  [12, sep],
  [26, ic(svg`${axes}<path d="M11 5v8l5-4z" fill="#29b729" stroke="#1d6a1d"></path>`)],
  [28, ic(svg`${axes}<path d="M12 3v14" stroke="#1f5fa5"></path><path d="M16 7l-3 3 3 2z" fill="#d23b2a"></path>`), true],
  [8, sep],
  [24, ic(svg`<rect x="1.500" y="2.500" width="17" height="15" fill="#eaf3ff" stroke="#2f7fc6"></rect><rect x="2" y="3" width="16" height="2" fill="#3f86c6"></rect><path d="M3 9l4-2 4 1 6-2" stroke="#d84b2a" fill="none"></path><path d="M3 14l4-2 4 2 6-2" stroke="#2ea82e" fill="none"></path>`), true],
  [8, drop],
  [13, grip],
  [26, ic(svg`<path d="M6 2v14l3.500-3 2.500 5 2-1-2.500-5H16z" fill="#444" stroke="#222" stroke-width="0.5"></path>`), true],
  [30, ic(svg`<path d="M10 3v6M10 11v6M3 10h6M11 10h6" stroke="#555"></path>`)],
  [8, sep],
  [28, ic(svg`<path d="M10 3v14" stroke="#555"></path>`)],
  [28, ic(svg`<path d="M3 10h14" stroke="#555"></path>`)],
  [28, ic(svg`<path d="M4 17L16 4" stroke="#777"></path>`)],
  [28, ic(svg`<path d="M2 13L13 3M5 16L16 6M4 6l4 8M8 4l4 8M12 2l3 8" stroke="#666" fill="none"></path>${fLabel('E')}`)],
  [28, ic(svg`${dots}<path d="M2 12h12M2 15h12" stroke="#555" stroke-dasharray="1 1"></path>${fLabel('F')}`)],
  [28, ic(svg`<text x="10" y="16" text-anchor="middle" font-family="Liberation Sans" font-size="15" fill="#555">A</text>`)],
  [28, ic(svg`<rect x="3.500" y="3.500" width="13" height="13" fill="none" stroke="#777" stroke-dasharray="1 1"></rect><text x="10" y="15" text-anchor="middle" font-family="Liberation Sans" font-weight="bold" font-size="12" fill="#555">T</text>`)],
  [28, ic(svg`${dots}<path d="M2 18l5-6 4 2" stroke="#666" fill="none"></path>${fLabel('F')}`)],
  [28, ic(svg`<ellipse cx="10" cy="10" rx="8" ry="6" fill="#808080" stroke="#555"></ellipse>`)],
  [28, ic(svg`<rect x="3" y="5" width="14" height="10" rx="1" fill="#808080" stroke="#555"></rect>`)],
  [28, ic(svg`<path d="M3 14L14 3M6 17L17 6" stroke="#777" stroke-width="1.500" stroke-dasharray="3 1"></path>`)],
  [28, ic(svg`<path d="M3 16L16 7M6 12v6M10 9v6M14 5v7" stroke="#666" fill="none"></path>`)],
  [28, ic(svg`<path d="M4 3v13M8 3v13M12 3v13" stroke="#555" stroke-dasharray="1 1"></path>${fLabel('F')}`)],
  [25, ic(svg`<path d="M7 3l3 4H4zM13 17l-3-4h6z" fill="#555"></path><path d="M13 8l3 3-3 3-3-3z" fill="#555"></path>`)],
  [8, drop],
  [11, sep],
];

@customElement('mt-toolbar')
export class MtToolbar extends LitElement {
  override render() {
    const frames: [string, number, boolean?][] = [['M5', 28], ['M15', 28], ['M30', 28], ['H1', 28], ['H4', 28, true], ['D1', 28], ['W1', 28], ['M', 22]];
    return html`
      ${TOOLS.map(([w, c, on]) => html`<span class="t ${on ? 'on' : ''}" style="width:${w}px">${c}</span>`)}
      ${frames.map(([t, w, on]) => html`<span class="t tf ${on ? 'on' : ''}" style="width:${w}px">${t}</span>`)}
      <span class="t search">
        <svg width="20" height="20" viewBox="0 0 20 20"><circle cx="12" cy="7" r="5" fill="none" stroke="#2a62c8" stroke-width="2"></circle><path d="M8 11l-5 6" stroke="#2a62c8" stroke-width="3"></path></svg>
      </span>
      <span class="t bell">
        <svg width="28" height="26" viewBox="0 0 28 26"><path d="M6 15c-3 1-3 6 2 6l3 3v-3c4 0 4-5 0-6z" fill="#d6d6d6" stroke="#aaa"></path><circle cx="18" cy="10" r="8.500" fill="#e0251b"></circle><text x="18" y="15" text-anchor="middle" font-family="Liberation Sans" font-weight="bold" font-size="14" fill="#fff">1</text></svg>
      </span>
    `;
  }

  static override styles = css`
    :host {
      display: flex;
      align-items: center;
      height: 28px;
      background: #f0f0f0;
      border-top: 1px solid #a0a0a0;
      box-sizing: border-box;
      font: 12px Roboto, sans-serif;
      color: #111;
    }
    .t {
      height: 24px;
      display: flex;
      align-items: center;
      justify-content: center;
      flex: none;
      box-sizing: border-box;
    }
    .on {
      background: #f8f8f8;
      outline: 1px solid #cfcfcf;
      outline-offset: -2px;
    }
    .tf {
      font: 10.5px 'DejaVu Sans', sans-serif;
      color: #555;
      letter-spacing: -0.4px;
    }
    .search {
      width: 26px;
    }
    .bell {
      width: 30px;
    }
    .grip {
      width: 3px;
      height: 18px;
      background: repeating-linear-gradient(#8c8c8c 0 1px, transparent 1px 2px);
    }
    .sep {
      width: 1px;
      height: 22px;
      background: #a8a8a8;
    }
    .order {
      display: flex;
      align-items: center;
      gap: 2px;
      width: 100%;
      padding-left: 5px;
      box-sizing: border-box;
      font-size: 13px;
      letter-spacing: -0.3px;
    }
  `;
}

const TABS: [string, number][] = [['H4', 88], ['H4', 88], ['H4', 88], ['Weekly', 112], ['H4', 88], ['H4', 88], ['Daily', 99], ['H4', 88], ['H4', 88], ['H4', 88], ['Daily', 101], ['H1', 89], ['Daily', 100], ['Daily', 100]];
const STATUS = [672, 290, 70, 68, 71, 66];

@customElement('app-root')
export class AppRoot extends LitElement {
  override render() {
    return html`
      <header class="title">
        <span class="logo">XM</span>
        <span class="caption">79044576: XM.COM-Demo 2 - Conto dimostrativo (demo) - Trading Point Of Financial Instruments Ltd - [IT40Cash,H4]</span>
        <span class="win"><svg width="10" height="10" viewBox="0 0 10 10"><path d="M0 5.500h10" stroke="#fff"></path></svg></span>
        <span class="win"><svg width="12" height="12" viewBox="0 0 12 12"><path d="M3 2.500V.5h8v8H9M1 2.500h8v9H1z" fill="none" stroke="#fff"></path></svg></span>
        <span class="win"><svg width="12" height="12" viewBox="0 0 12 12"><path d="M1 1l10 10M11 1L1 11" stroke="#fff"></path></svg></span>
      </header>
      <nav class="menu">
        <svg class="mdi" width="16" height="16" viewBox="0 0 16 16"><rect x="1.500" y="1.500" width="10" height="9" fill="#dbe9fb" stroke="#6d96c9"></rect><rect x="5.500" y="5.500" width="10" height="9" fill="#eef5ff" stroke="#6d96c9"></rect><path d="M7 11l2-2 2 2 2-3" stroke="#3b6fb5" fill="none"></path></svg>
        ${['File', 'Visualizza', 'Inserisci', 'Grafici', 'Strumenti', 'Finestra', 'Aiuto'].map((m) => html`<span class="item">${m}</span>`)}
        <span class="mdi-btns">
          <i><svg width="10" height="10" viewBox="0 0 10 10"><path d="M2 8h6" stroke="#333" stroke-width="2"></path></svg></i>
          <i><svg width="10" height="10" viewBox="0 0 10 10"><path d="M3 3V1h6v5H7M1 3h6v6H1z" fill="none" stroke="#333"></path></svg></i>
          <i><svg width="10" height="10" viewBox="0 0 10 10"><path d="M2 2l6 6M8 2L2 8" stroke="#333" stroke-width="1.500"></path></svg></i>
        </span>
      </nav>
      <mt-toolbar></mt-toolbar>
      <mt-chart></mt-chart>
      <div class="tabs">
        ${TABS.map(([n, w], i) => html`<span class="tab ${i === 0 ? 'active' : ''}" style="width:${w}px">IT40Cash,${n}</span>`)}
        <span class="tab cut">IT</span>
        <span class="arrows">
          <svg width="8" height="10" viewBox="0 0 8 10"><path d="M6 1v8L1 5z" fill="#999"></path></svg>
          <svg width="8" height="10" viewBox="0 0 8 10"><path d="M2 1v8l5-4z" fill="#111"></path></svg>
        </span>
      </div>
      <footer class="status">
        ${STATUS.map((w, i) => html`<span class="cell" style="width:${w}px">${i === 0 ? 'Per aiuto, premi F1' : i === 1 ? 'Default' : ''}</span>`)}
        <span class="conn">
          <svg width="24" height="14" viewBox="0 0 24 14">
            ${[0, 3, 6, 9, 12, 15, 18, 21].map((x, i) => svg`<rect x=${x} y=${3 - (i % 3)} width="2" height=${5 + (i % 3)} fill="#6b7a00"></rect><rect x=${x} y="8" width="2" height="6" fill="#1c5a9c"></rect>`)}
          </svg>
          1290/2 kb
        </span>
      </footer>
      <!-- hand-drawn marks lie over the chart and reach up into the toolbar -->
      <svg class="marks" width="1366" height="738" viewBox="0 0 1366 738" shape-rendering="crispEdges">
        <g fill="none" stroke="#000" stroke-linecap="round">
          <ellipse cx="486" cy="254" rx="31" ry="24" stroke-width="4"></ellipse>
          <ellipse cx="750" cy="234" rx="36" ry="20" stroke-width="4"></ellipse>
          <ellipse cx="859" cy="593" rx="51" ry="58" stroke-width="4"></ellipse>
          <g stroke-width="5">
            <path d="M1177 30L1082 127M1104 80L1082 125M1118 117L1082 127"></path>
            <path d="M933 205L1034 139M983 155L1034 138M1015 167L1034 139"></path>
            <path d="M1054 298L1060 192M1045 230L1060 192M1077 225L1060 192"></path>
          </g>
        </g>
      </svg>
    `;
  }

  static override styles = css`
    :host {
      display: flex;
      flex-direction: column;
      position: relative;
      width: 1366px;
      height: 738px;
      overflow: hidden;
      background: #f0f0f0;
      font: 12px Roboto, sans-serif;
      color: #111;
    }
    .marks {
      position: absolute;
      left: 0;
      top: 0;
      pointer-events: none;
    }
    .title {
      height: 23px;
      flex: none;
      display: flex;
      align-items: center;
      background: #c436ae;
      color: #fff;
      font-size: 12px;
    }
    .logo {
      width: 17px;
      height: 16px;
      margin: 0 6px 0 2px;
      border-radius: 2px;
      background: #111;
      color: #fff;
      font: italic bold 8px 'Liberation Sans', sans-serif;
      line-height: 16px;
      text-align: center;
    }
    .caption {
      flex: 1;
      white-space: nowrap;
      overflow: hidden;
    }
    .win {
      width: 46px;
      display: flex;
      justify-content: center;
    }
    .menu {
      height: 20px;
      flex: none;
      display: flex;
      align-items: center;
      background: #f9f9f9;
      font-size: 12px;
      letter-spacing: -0.3px;
    }
    .mdi {
      margin: 0 -1px 0 4px;
    }
    .item {
      padding: 0 9px;
    }
    .mdi-btns {
      margin-left: auto;
      display: flex;
      gap: 2px;
      padding-right: 1px;
    }
    .mdi-btns i {
      width: 17px;
      height: 17px;
      display: flex;
      align-items: center;
      justify-content: center;
      background: #f4f4f4;
      border: 1px solid #e2e2e2;
      box-sizing: border-box;
    }
    .tabs {
      height: 22px;
      flex: none;
      display: flex;
      align-items: stretch;
      padding-left: 6px;
      box-sizing: border-box;
      position: relative;
      border-top: 2px solid #fff;
      background: linear-gradient(#111 1px, #f0f0f0 1px);
      font-size: 12px;
      letter-spacing: -0.25px;
    }
    .tab {
      flex: none;
      display: flex;
      align-items: center;
      box-sizing: border-box;
      padding: 0 0 2px 11px;
      margin: 3px 0 2px;
      color: #6a6a6a;
      border-right: 1px solid #777;
    }
    .active {
      margin: 0;
      background: #fff;
      color: #111;
      border: 1px solid #111;
      border-bottom-width: 2px;
    }
    .cut {
      width: 22px;
      overflow: hidden;
      border-right: 0;
    }
    .arrows {
      margin-left: auto;
      display: flex;
      align-items: center;
      gap: 11px;
      padding-right: 8px;
    }
    .status {
      height: 23px;
      flex: none;
      display: flex;
      align-items: center;
      font-size: 12px;
    }
    .cell {
      height: 19px;
      line-height: 19px;
      padding-left: 2px;
      border-right: 1px solid #a8a8a8;
      box-sizing: border-box;
      flex: none;
    }
    .cell:nth-child(2) {
      padding-left: 6px;
    }
    .conn {
      display: flex;
      align-items: center;
      gap: 4px;
      padding-left: 4px;
    }
  `;
}
